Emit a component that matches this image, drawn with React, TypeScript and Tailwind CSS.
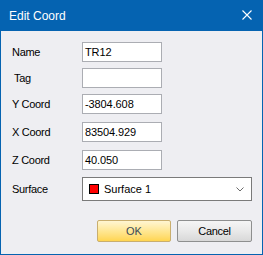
import React from "react";

const font = { fontFamily: '"Liberation Sans", Arial, sans-serif' };

function Field({ label, value, mt, indent }: { label: string; value: string; mt: string; indent?: boolean }) {
  return (
    <div className={`flex items-center ${mt}`}>
      <div className={`w-[70px] h-[20px] flex items-center text-[11px] tracking-[-0.3px] text-[#000] ${indent ? "pl-[2px]" : ""}`}>
        {label}
      </div>
      <div className="w-[80px] h-[20px] border border-[#ABADB3] bg-white flex items-center pl-[2px] text-[11px] tracking-[-0.1px] text-[#000]">
        {value}
      </div>
    </div>
  );
}

export default function App() {
  return (
    <div className="w-[263px] h-[255px] flex flex-col bg-[#0563B1]" style={font}>
      <div className="h-[31px] flex items-center justify-between pl-[9px] pr-[11px] text-white text-[12px]">
        <span className="pt-[1px]">Edit Coord</span>
        <svg width="10" height="10" viewBox="0 0 10 10" className="mt-[-1px]">
          <path d="M0.5 0.5 L9.5 9.5 M9.5 0.5 L0.5 9.5" stroke="white" strokeWidth="1.1" />
        </svg>
      </div>
      <div className="flex-1 mx-[1px] mb-[1px] bg-[#EEEEF2] pt-[11px] pl-[11px] pr-[10px] flex flex-col">
        <Field label="Name" value="TR12" mt="mt-0" />
        <Field label="Tag" value="" mt="mt-[6px]" indent />
        <Field label="Y Coord" value="-3804.608" mt="mt-[6px]" />
        <Field label="X Coord" value="83504.929" mt="mt-[8px]" />
        <Field label="Z Coord" value="40.050" mt="mt-[8px]" />
        <div className="flex items-center mt-[7px]">
          <div className="w-[70px] h-[24px] flex items-center text-[11px] tracking-[-0.3px] text-[#000]">Surface</div>
          <div className="w-[170px] h-[24px] border border-[#7A7A7A] bg-white flex items-center pl-[6px] pr-[7px] text-[11px] text-[#000]">
            <div className="w-[10px] h-[10px] bg-[#FF0000] border border-black" />
            <span className="ml-[5px] flex-1">Surface 1</span>
            <svg width="8" height="5" viewBox="0 0 8 5">
              <path d="M0.5 0.5 L4 4 L7.5 0.5" stroke="#6B6B6B" strokeWidth="1" fill="none" />
            </svg>
          </div>
        </div>
        <div className="flex justify-end gap-[6px] mt-[19px]">
          <div className="w-[74px] h-[22px] rounded-[2px] border border-[#C9AE6E] bg-gradient-to-b from-[#FFF6D2] via-[#FFE793] to-[#FFD54F] flex items-center justify-center text-[11px] text-[#3B4A5A]">
            OK
          </div>
          <div className="w-[75px] h-[22px] rounded-[2px] border border-[#8E8F8F] bg-gradient-to-b from-[#F5F5F5] via-[#E9E9E9] to-[#D8D8D8] flex items-center justify-center text-[11px] tracking-[-0.3px] text-[#000]">
            Cancel
          </div>
        </div>
      </div>
    </div>
  );
}
